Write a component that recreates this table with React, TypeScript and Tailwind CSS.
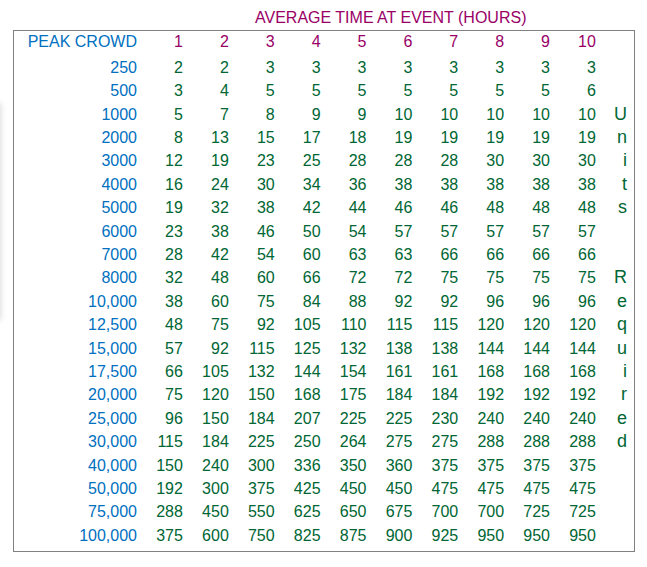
import React from "react";

const rows: [string, string[], string][] = [
  ["250", ["2", "2", "3", "3", "3", "3", "3", "3", "3", "3"], ""],
  ["500", ["3", "4", "5", "5", "5", "5", "5", "5", "5", "6"], ""],
  ["1000", ["5", "7", "8", "9", "9", "10", "10", "10", "10", "10"], "U"],
  ["2000", ["8", "13", "15", "17", "18", "19", "19", "19", "19", "19"], "n"],
  ["3000", ["12", "19", "23", "25", "28", "28", "28", "30", "30", "30"], "i"],
  ["4000", ["16", "24", "30", "34", "36", "38", "38", "38", "38", "38"], "t"],
  ["5000", ["19", "32", "38", "42", "44", "46", "46", "48", "48", "48"], "s"],
  ["6000", ["23", "38", "46", "50", "54", "57", "57", "57", "57", "57"], ""],
  ["7000", ["28", "42", "54", "60", "63", "63", "66", "66", "66", "66"], ""],
  ["8000", ["32", "48", "60", "66", "72", "72", "75", "75", "75", "75"], "R"],
  ["10,000", ["38", "60", "75", "84", "88", "92", "92", "96", "96", "96"], "e"],
  ["12,500", ["48", "75", "92", "105", "110", "115", "115", "120", "120", "120"], "q"],
  ["15,000", ["57", "92", "115", "125", "132", "138", "138", "144", "144", "144"], "u"],
  ["17,500", ["66", "105", "132", "144", "154", "161", "161", "168", "168", "168"], "i"],
  ["20,000", ["75", "120", "150", "168", "175", "184", "184", "192", "192", "192"], "r"],
  ["25,000", ["96", "150", "184", "207", "225", "225", "230", "240", "240", "240"], "e"],
  ["30,000", ["115", "184", "225", "250", "264", "275", "275", "288", "288", "288"], "d"],
  ["40,000", ["150", "240", "300", "336", "350", "360", "375", "375", "375", "375"], ""],
  ["50,000", ["192", "300", "375", "425", "450", "450", "475", "475", "475", "475"], ""],
  ["75,000", ["288", "450", "550", "625", "650", "675", "700", "700", "725", "725"], ""],
  ["100,000", ["375", "600", "750", "825", "875", "900", "925", "950", "950", "950"], ""],
];

const hours = ["1", "2", "3", "4", "5", "6", "7", "8", "9", "10"];

export default function App() {
  return (
    <div
      className="relative w-[647px] h-[567px] bg-white overflow-hidden text-[16px]"
      style={{ fontFamily: '"Liberation Sans", Arial, sans-serif' }}
    >
      <div className="absolute left-[-12px] top-[103px] w-[12px] h-[217px] shadow-[0_0_7px_rgba(0,0,0,0.18)] bg-white" />
      <div className="h-[30px] pt-[8.7px] pl-[255px] leading-[18.4px] text-[#990066] whitespace-nowrap">
        AVERAGE TIME AT EVENT (HOURS)
      </div>
      <div className="ml-[13px] w-[622px] border border-[#808080] pb-[3.7px] pr-[7px]">
        <div className="grid grid-cols-[123px_repeat(10,45.9px)_31px] h-[24.9px] leading-[22px] whitespace-nowrap">
          <div className="text-right text-[#0070c0]">PEAK CROWD</div>
          {hours.map((h) => (
            <div key={h} className="text-right text-[#990066]">
              {h}
            </div>
          ))}
          <div />
        </div>
        {rows.map(([label, vals, letter]) => (
          <div
            key={label}
            className="grid grid-cols-[123px_repeat(10,45.9px)_31px] h-[23.4px] leading-[23.4px] whitespace-nowrap"
          >
            <div className="text-right text-[#0070c0]">{label}</div>
            {vals.map((v, i) => (
              <div key={i} className="text-right text-[#006633]">
                {v}
              </div>
            ))}
            <div className="text-right text-[#006633] text-[18px]">{letter}</div>
          </div>
        ))}
      </div>
    </div>
  );
}
